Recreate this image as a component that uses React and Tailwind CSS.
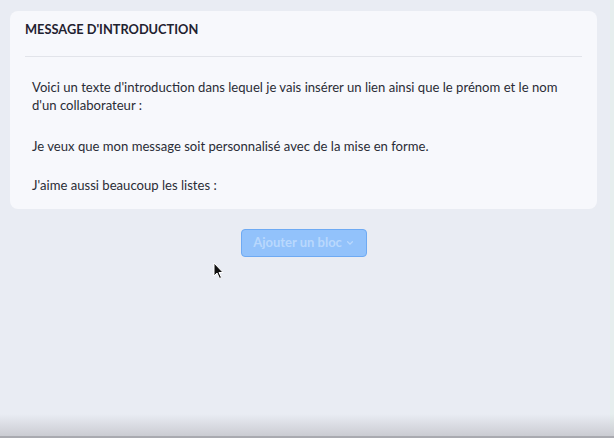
export default function App() {
  return (
    <div
      className="relative h-[438px] w-full overflow-hidden bg-[#e9ecf3] px-[10px] pt-[11px]"
      style={{ fontFamily: "Lato, 'Liberation Sans', sans-serif" }}
    >
      {/* card */}
      <div className="w-[587px] rounded-lg bg-[#f7f8fc]">
        <div className="mx-[15px] border-b border-[#e2e4ea] pt-[9px] pb-[18px]">
          <h2 className="text-[12.8px] leading-[18px] font-bold text-[#1f2230]">
            MESSAGE D'INTRODUCTION
          </h2>
        </div>
        <div className="px-[22px] pt-[21px] pb-[15px] text-[13.1px] leading-[18px] text-[#2a2c36]">
          <p className="mb-[23px]">
            Voici un texte d'introduction dans lequel je vais insérer un lien
            ainsi que le prénom et le nom d'un collaborateur :
          </p>
          <p className="mb-[21px]">
            Je veux que mon message soit personnalisé avec de la mise en forme.
          </p>
          <p>J'aime aussi beaucoup les listes :</p>
        </div>
      </div>

      <div className="flex w-[587px] justify-center pt-[20px]">
        <button className="flex h-[28px] w-[126px] items-center justify-center gap-1 rounded-[4px] border border-[#6eaaf3] bg-[#92c2fb] text-[13px] font-bold text-[#b9d8fd]">
          Ajouter un bloc
          <svg width="8" height="8" viewBox="0 0 10 10" fill="none">
            <path d="M2 3.5l3 3 3-3" stroke="#b9d8fd" strokeWidth="1.6" strokeLinecap="round" />
          </svg>
        </button>
      </div>

      {/* mouse cursor */}
      <svg className="absolute left-[213px] top-[262px]" width="12" height="18" viewBox="0 0 12 18">
        <path d="M1 1 L1 14 L4 11 L6.5 16.5 L8.5 15.5 L6 10.5 L10 10.5 Z" fill="#111" stroke="#fff" strokeWidth="1" />
      </svg>

      {/* right edge strip */}
      <div className="absolute right-0 top-0 h-full w-[4px] bg-[#e6eeee]" />
      {/* bottom shade */}
      <div className="absolute bottom-0 left-0 h-[24px] w-full bg-gradient-to-b from-[#e9ecf3]/0 to-[#c8c9cf]" />
      <div className="absolute bottom-0 left-0 h-[2px] w-full bg-[#a9aab0]" />
    </div>
  );
}
